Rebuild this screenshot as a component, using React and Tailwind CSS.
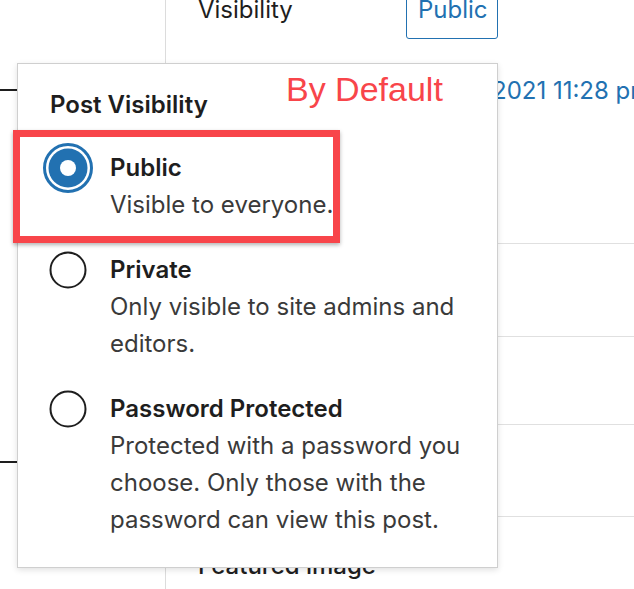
import React from 'react';

const Chevron = () => (
    <svg className="w-[40px] h-[40px] -mr-[25px] shrink-0" viewBox="0 0 24 24" fill="#1e1e1e">
        <path d="M17.5 11.6L12 16l-5.5-4.4.9-1.2L12 14l4.6-3.6z" />
    </svg>
);

const Radio = ({ checked }) => (
    <div className="w-[36px] h-[37px] shrink-0 flex items-center justify-center">
        {checked ? (
            <svg className="w-[52px] h-[52px] shrink-0" viewBox="0 0 52 52">
                <circle cx="26" cy="26" r="23.5" fill="none" stroke="#2271b1" strokeWidth="3" />
                <circle cx="26" cy="26" r="19.5" fill="#2271b1" />
                <circle cx="26" cy="26" r="8" fill="#fff" />
            </svg>
        ) : (
            <svg className="w-[38px] h-[38px] shrink-0" viewBox="0 0 38 38">
                <circle cx="19" cy="19" r="17.5" fill="none" stroke="#1e1e1e" strokeWidth="2" />
            </svg>
        )}
    </div>
);

const Option = ({ checked, title, lines }) => (
    <div className="flex">
        <Radio checked={checked} />
        <div className="ml-[24px] text-[24px] leading-[37px]">
            <div className="font-semibold text-[#1e1e1e]">{title}</div>
            {lines.map((line) => (
                <div key={line} className="text-[#3a3a3a] whitespace-nowrap">{line}</div>
            ))}
        </div>
    </div>
);

export default function App() {
    return (
        <div className="relative w-[634px] h-[589px] overflow-hidden bg-white font-['Inter',sans-serif] text-[#1e1e1e]">
            <div className="flex h-full">
                {/* Editor canvas edge */}
                <div className="w-[166px] shrink-0 border-r border-[#dcdcdc] flex flex-col">
                    <div className="mt-[89px] h-[2px] shrink-0 bg-[#1e1e1e]" />
                    <div className="mt-[370px] h-[2px] shrink-0 bg-[#1e1e1e]" />
                </div>

                {/* Sidebar */}
                <div className="flex-1 flex flex-col text-[24px]">
                    <div className="-mt-[20px] h-[59px] shrink-0 flex items-center pl-[32px]">
                        <span className="w-[208px]">Visibility</span>
                        <span className="h-[59px] w-[92px] flex items-center pl-[11px] border-[1.5px] border-[#2271b1] rounded-[3px] text-[#2271b1]">
                            Public
                        </span>
                    </div>
                    <div className="mt-[33px] h-[37px] shrink-0 flex items-center pl-[326px] whitespace-nowrap">
                        <span className="text-[#2271b1]">2021 11:28 pm</span>
                    </div>
                    <div className="h-[134px] shrink-0" />
                    <div className="h-[93px] shrink-0 border-t border-[#e0e0e0] flex items-center justify-end">
                        <Chevron />
                    </div>
                    <div className="h-[88px] shrink-0 border-t border-[#e0e0e0]" />
                    <div className="h-[92px] shrink-0 border-t border-[#e0e0e0] flex items-center justify-end">
                        <Chevron />
                    </div>
                    <div className="h-[92px] shrink-0 border-t border-[#e0e0e0] flex items-center justify-between pl-[32px]">
                        <span className="font-medium pt-[6px]">Featured image</span>
                        <Chevron />
                    </div>
                </div>
            </div>

            {/* Visibility popover */}
            <div className="absolute left-[17px] top-[63px] w-[481px] h-[505px] bg-white border border-[#cfcfcf] shadow-[0_2px_6px_rgba(0,0,0,0.12)] pt-[22px] px-[32px]">
                <div className="text-[24px] leading-[37px] font-semibold">Post Visibility</div>
                <div className="mt-[26px] flex flex-col gap-[28px]">
                    <Option checked title="Public" lines={['Visible to everyone.']} />
                    <Option title="Private" lines={['Only visible to site admins and', 'editors.']} />
                    <Option
                        title="Password Protected"
                        lines={['Protected with a password you', 'choose. Only those with the', 'password can view this post.']}
                    />
                </div>
            </div>

            {/* Annotations */}
            <div className="absolute left-[13px] top-[130px] w-[327px] h-[113px] border-[7px] border-[#f8454a] shadow-[0_2px_4px_rgba(0,0,0,0.3)]" />
            <div className="absolute left-[286px] top-[72px] font-['Liberation_Sans',sans-serif] text-[34px] leading-none text-[#f8454a]">
                By Default
            </div>
        </div>
    );
}
